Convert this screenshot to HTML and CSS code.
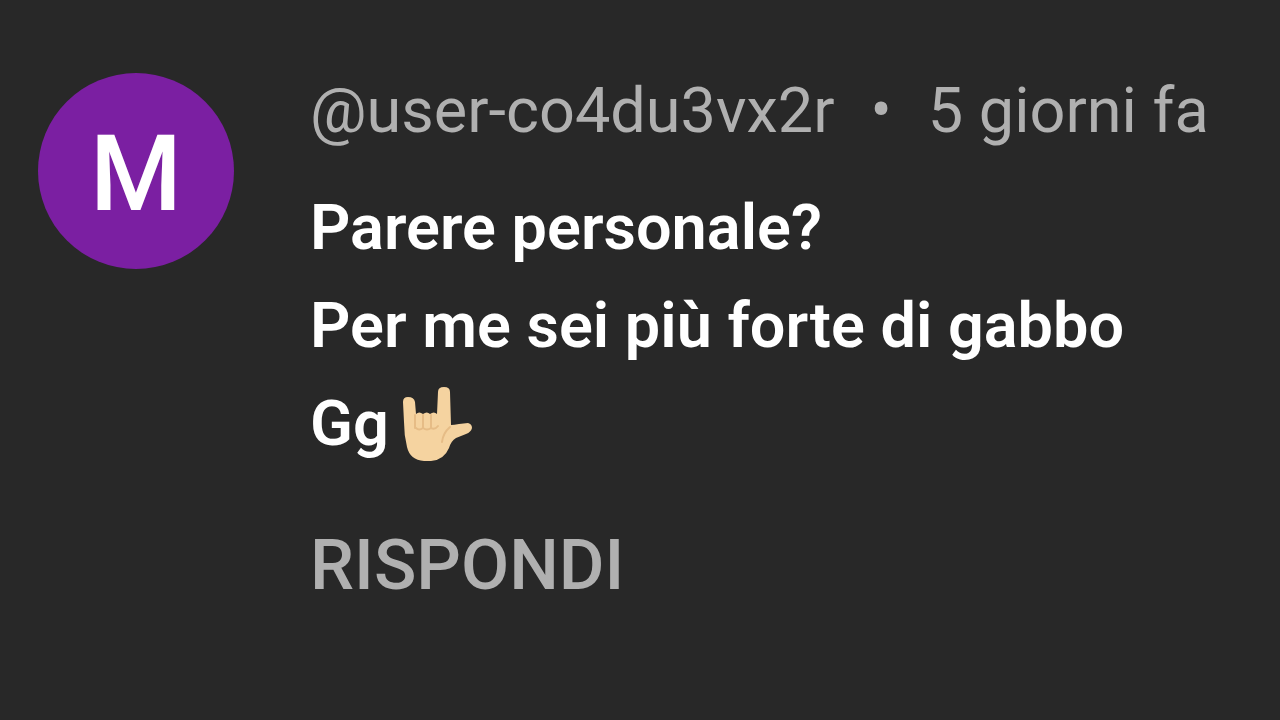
FILE: index.html
```html
<!DOCTYPE html>
<html lang="it">
<head>
    <meta charset="UTF-8">
    <meta name="viewport" content="width=device-width, initial-scale=1.0">
    <title>Commento</title>
    <link rel="stylesheet" href="styles.css">
</head>
<body>
    <article class="comment">
        <div class="avatar">M</div>

        <div class="comment-body">
            <header class="comment-header">
                <span class="author">@user-co4du3vx2r</span>
                <span class="dot">•</span>
                <span class="time">5 giorni fa</span>
            </header>

            <div class="comment-text">
                <p>Parere personale?</p>
                <p>Per me sei più forte di gabbo</p>
                <p class="last-line">Gg<svg class="emoji" viewBox="0 0 72 78" role="img" aria-label="Mano che fa le corna">
                    <path fill="#f5d3a0" d="M2 17Q2 12 7 12Q13 12 14 17L15 29Q18 26 22 29Q26 26 29 29Q33 26 36 29L37 7Q37 2 43 2Q49 2 49 7L50 40Q53 40 58 39L67 38Q71 39 71 43Q70 47 65 49L55 53Q50 56 48 63Q43 75 30 76H23Q9 75 6 62Q3 50 3 37Z"/>
                    <path fill="none" stroke="#e6bc86" stroke-width="2" stroke-linecap="round" d="M14 30V43M22 30V43M30 30V43M15 43Q18 46 22 43Q26 46 30 43Q34 45 37 41M49 42Q42 48 41 57"/>
                </svg></p>
            </div>

            <button class="reply-btn" type="button">RISPONDI</button>
        </div>
    </article>
</body>
</html>
```

FILE: styles.css
```css
* {
    margin: 0;
    padding: 0;
    box-sizing: border-box;
}

body {
    font-family: Roboto, sans-serif;
    background: #282828;
    color: #fff;
}

.comment {
    display: flex;
    align-items: flex-start;
    gap: 76px;
    padding: 71px 38px;
}

.avatar {
    display: flex;
    align-items: center;
    justify-content: center;
    flex-shrink: 0;
    width: 196px;
    height: 196px;
    margin-top: 2px;
    padding-top: 6px;
    border-radius: 50%;
    background: #7b1fa2;
    font-size: 105px;
    font-weight: 500;
}

.comment-body {
    flex: 1;
}

.comment-header {
    display: flex;
    margin-bottom: 28px;
    font-size: 63px;
    line-height: 80px;
    color: #b0b0b0;
    white-space: nowrap;
}

.dot {
    margin: 0 36px;
}

.comment-text {
    margin-bottom: 52px;
    font-size: 63px;
    font-weight: 600;
    line-height: 98px;
}

.last-line {
    display: flex;
    align-items: center;
}

.emoji {
    width: 72px;
    height: 78px;
    margin-left: 12px;
}

.reply-btn {
    display: block;
    background: none;
    border: none;
    font-family: inherit;
    font-size: 70px;
    font-weight: 500;
    line-height: 80px;
    color: #b0b0b0;
    cursor: pointer;
}
```
